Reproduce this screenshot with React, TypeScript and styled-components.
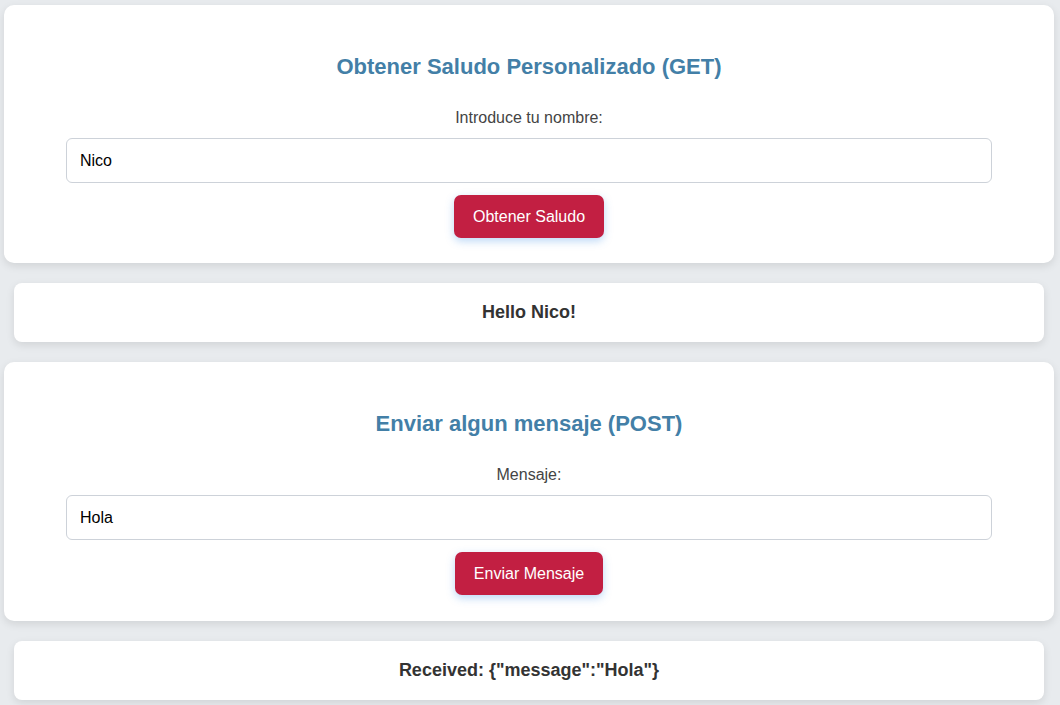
import React, { useState } from "react";
import styled, { createGlobalStyle } from "styled-components";

const Global = createGlobalStyle`
  html, body { margin: 0; padding: 0; background: #e8ebee; }
  body { font-family: "Liberation Sans", Arial, sans-serif; }
`;

const Page = styled.div`
  display: flex;
  flex-direction: column;
  gap: 20px;
  padding: 5px 6px 20px 4px;
`;

const Card = styled.section<{ $extra?: number }>`
  background: #ffffff;
  border-radius: 10px;
  box-shadow: 0 3px 8px rgba(0, 0, 0, 0.1);
  padding: 30px 62px ${(p) => 25 + (p.$extra ?? 0)}px;
  display: flex;
  flex-direction: column;
  align-items: center;
`;

const Title = styled.h2`
  margin: 19px 0 0;
  font-size: 22px;
  line-height: 25px;
  font-weight: 700;
  color: #437fa7;
  text-align: center;
`;

const Label = styled.label`
  margin-top: 29px;
  font-size: 16px;
  line-height: 19px;
  color: #444;
`;

const Input = styled.input`
  box-sizing: border-box;
  width: 100%;
  height: 45px;
  margin-top: 11px;
  padding: 0 13px;
  border: 1px solid #cdd2d9;
  border-radius: 6px;
  font-family: "Liberation Sans", Arial, sans-serif;
  font-size: 16px;
  color: #000;
  background: #fff;
  outline: none;
`;

const Button = styled.button`
  margin-top: 12px;
  height: 43px;
  padding: 0 19px;
  border: none;
  border-radius: 7px;
  background: #c21f42;
  color: #fff;
  font-family: "Liberation Sans", Arial, sans-serif;
  font-size: 16px;
  box-shadow: 0 3px 8px rgba(60, 140, 230, 0.35);
  cursor: pointer;
`;

const Result = styled.div`
  margin: 0 10px;
  background: #ffffff;
  border-radius: 8px;
  box-shadow: 0 3px 8px rgba(0, 0, 0, 0.1);
  padding: 19px;
  text-align: center;
  font-size: 18px;
  line-height: 21px;
  font-weight: 700;
  color: #333;
`;

export default function App() {
  const [name, setName] = useState("Nico");
  const [msg, setMsg] = useState("Hola");
  return (
    <>
      <Global />
      <Page>
        <Card>
          <Title>Obtener Saludo Personalizado (GET)</Title>
          <Label htmlFor="name">Introduce tu nombre:</Label>
          <Input id="name" value={name} onChange={(e) => setName(e.target.value)} />
          <Button>Obtener Saludo</Button>
        </Card>
        <Result>Hello Nico!</Result>
        <Card $extra={1}>
          <Title>Enviar algun mensaje (POST)</Title>
          <Label htmlFor="msg">Mensaje:</Label>
          <Input id="msg" value={msg} onChange={(e) => setMsg(e.target.value)} />
          <Button>Enviar Mensaje</Button>
        </Card>
        <Result>Received: {'{"message":"Hola"}'}</Result>
      </Page>
    </>
  );
}
